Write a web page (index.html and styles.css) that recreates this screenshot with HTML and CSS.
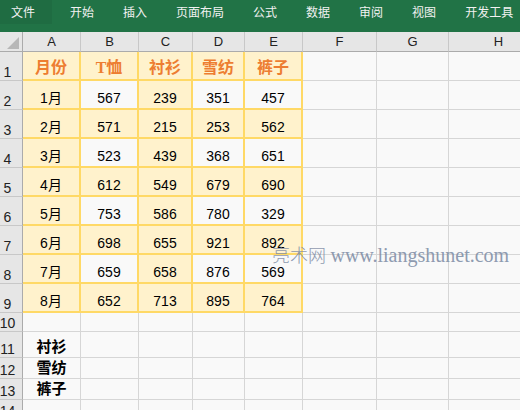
FILE: index.html
```html
<!DOCTYPE html>
<html lang="zh">
<head>
<meta charset="utf-8">
<title>Excel</title>
<link rel="stylesheet" href="styles.css">
</head>
<body>
<div class="app">
  <nav class="ribbon">
    <span class="tab file">文件</span>
    <span class="tab">开始</span>
    <span class="tab">插入</span>
    <span class="tab">页面布局</span>
    <span class="tab">公式</span>
    <span class="tab">数据</span>
    <span class="tab">审阅</span>
    <span class="tab">视图</span>
    <span class="tab">开发工具</span>
  </nav>
  <div class="sheet">
    <div class="h corner"><span class="tri"></span></div>
    <div class="h">A</div><div class="h">B</div><div class="h">C</div><div class="h">D</div><div class="h">E</div><div class="h">F</div><div class="h">G</div><div class="h">H</div>

    <div class="r">1</div>
    <div class="c y t">月份</div><div class="c y t">T恤</div><div class="c y t">衬衫</div><div class="c y t">雪纺</div><div class="c y t">裤子</div>
    <div class="c"></div><div class="c"></div><div class="c"></div>

    <div class="r">2</div>
    <div class="c y">1月</div><div class="c w">567</div><div class="c y">239</div><div class="c w">351</div><div class="c w">457</div>
    <div class="c"></div><div class="c"></div><div class="c"></div>

    <div class="r">3</div>
    <div class="c y">2月</div><div class="c y">571</div><div class="c y">215</div><div class="c y">253</div><div class="c y">562</div>
    <div class="c"></div><div class="c"></div><div class="c"></div>

    <div class="r">4</div>
    <div class="c y">3月</div><div class="c w">523</div><div class="c y">439</div><div class="c w">368</div><div class="c w">651</div>
    <div class="c"></div><div class="c"></div><div class="c"></div>

    <div class="r">5</div>
    <div class="c y">4月</div><div class="c y">612</div><div class="c y">549</div><div class="c y">679</div><div class="c y">690</div>
    <div class="c"></div><div class="c"></div><div class="c"></div>

    <div class="r">6</div>
    <div class="c y">5月</div><div class="c w">753</div><div class="c y">586</div><div class="c w">780</div><div class="c w">329</div>
    <div class="c"></div><div class="c"></div><div class="c"></div>

    <div class="r">7</div>
    <div class="c y">6月</div><div class="c y">698</div><div class="c y">655</div><div class="c y">921</div><div class="c y">892</div>
    <div class="c"></div><div class="c"></div><div class="c"></div>

    <div class="r">8</div>
    <div class="c y">7月</div><div class="c w">659</div><div class="c y">658</div><div class="c w">876</div><div class="c w">569</div>
    <div class="c"></div><div class="c"></div><div class="c"></div>

    <div class="r">9</div>
    <div class="c y">8月</div><div class="c y">652</div><div class="c y">713</div><div class="c y">895</div><div class="c y">764</div>
    <div class="c"></div><div class="c"></div><div class="c"></div>

    <div class="r">10</div>
    <div class="c"></div><div class="c"></div><div class="c"></div><div class="c"></div><div class="c"></div><div class="c"></div><div class="c"></div><div class="c"></div>

    <div class="r">11</div>
    <div class="c b">衬衫</div><div class="c"></div><div class="c"></div><div class="c"></div><div class="c"></div><div class="c"></div><div class="c"></div><div class="c"></div>

    <div class="r">12</div>
    <div class="c b">雪纺</div><div class="c"></div><div class="c"></div><div class="c"></div><div class="c"></div><div class="c"></div><div class="c"></div><div class="c"></div>

    <div class="r">13</div>
    <div class="c b">裤子</div><div class="c"></div><div class="c"></div><div class="c"></div><div class="c"></div><div class="c"></div><div class="c"></div><div class="c"></div>

    <div class="r">14</div>
    <div class="c"></div><div class="c"></div><div class="c"></div><div class="c"></div><div class="c"></div><div class="c"></div><div class="c"></div><div class="c"></div>
  </div>
  <div class="watermark"><span class="wm-cn">亮术网</span> <span class="wm-en">www.liangshunet.com</span></div>
</div>
</body>
</html>
```

FILE: styles.css
```css
html, body {
  margin: 0;
  padding: 0;
  background: #f9f9f9;
}
body {
  width: 520px;
  height: 410px;
  overflow: hidden;
  font-family: "Liberation Sans", "Noto Sans CJK SC", sans-serif;
}
.app {
  position: relative;
  width: 520px;
  height: 410px;
  overflow: hidden;
}
.ribbon {
  height: 32px;
  background: #217346;
  display: flex;
  align-items: flex-start;
  gap: 29px;
  box-sizing: border-box;
}
.tab {
  font-family: "Noto Sans CJK SC", sans-serif;
  font-size: 12px;
  line-height: 24px;
  height: 24px;
  color: #f1f1f1;
  white-space: nowrap;
}
.tab.file {
  background: #1f6c42;
  padding: 0 17px 0 11px;
  margin-right: -11px;
}
.sheet {
  display: grid;
  grid-template-columns: 23px 58px 58px 54px 52px 58px 74px 72px 100px;
  grid-template-rows: 20px repeat(9, 29px) 19px 26px 21px 21px 20px;
}
.h {
  background: #e6e6e6;
  border-right: 1px solid #c8c8c8;
  border-bottom: 1px solid #ababab;
  box-sizing: border-box;
  font-size: 13px;
  color: #222;
  display: flex;
  align-items: center;
  justify-content: center;
}
.corner {
  position: relative;
  border-right-color: #ababab;
}
.tri {
  position: absolute;
  left: 7px;
  top: 5px;
  width: 0;
  height: 0;
  border-style: solid;
  border-width: 0 0 12px 12px;
  border-color: transparent transparent #b7b7b7 transparent;
}
.r {
  background: #e6e6e6;
  border-right: 1px solid #ababab;
  border-bottom: 1px solid #c8c8c8;
  box-sizing: border-box;
  font-size: 14px;
  line-height: 14px;
  color: #222;
  display: flex;
  align-items: flex-end;
  justify-content: center;
  padding: 0 7px 1px 0;
}
.c {
  background: #f9f9f9;
  border-right: 1px solid #d6d6d6;
  border-bottom: 1px solid #d6d6d6;
  box-sizing: border-box;
  display: flex;
  align-items: flex-end;
  justify-content: center;
  font-size: 14px;
  line-height: 14px;
  color: #000;
  padding-bottom: 3px;
  white-space: nowrap;
}
.y, .w {
  border-right: 2px solid #ffd966;
  border-bottom: 2px solid #ffd966;
}
.y { background: #fff2cc; }
.w { background: #f9f9f9; }
.t {
  font-family: "Liberation Serif", "Noto Sans CJK SC", serif;
  font-weight: bold;
  font-size: 16px;
  line-height: 16px;
  color: #ed7d31;
  padding-bottom: 3px;
}
.b {
  font-family: "Noto Sans CJK SC", sans-serif;
  font-weight: bold;
  font-size: 15px;
  line-height: 15px;
  padding-bottom: 4px;
}
.watermark {
  position: absolute;
  left: 272px;
  top: 244px;
  line-height: 20px;
  color: #7c8ba4;
  opacity: 0.85;
  white-space: nowrap;
}
.wm-cn {
  font-family: "Noto Sans CJK SC", sans-serif;
  font-size: 18px;
  font-weight: 300;
}
.wm-en {
  font-family: "Liberation Serif", serif;
  font-size: 20px;
}
```
